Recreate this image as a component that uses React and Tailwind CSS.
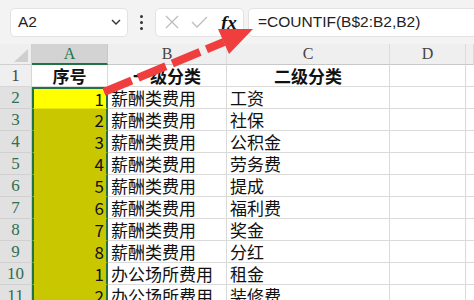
import React from 'react';

const rows = [
  { n: 1, a: '1', b: '薪酬类费用', c: '工资' },
  { n: 2, a: '2', b: '薪酬类费用', c: '社保' },
  { n: 3, a: '3', b: '薪酬类费用', c: '公积金' },
  { n: 4, a: '4', b: '薪酬类费用', c: '劳务费' },
  { n: 5, a: '5', b: '薪酬类费用', c: '提成' },
  { n: 6, a: '6', b: '薪酬类费用', c: '福利费' },
  { n: 7, a: '7', b: '薪酬类费用', c: '奖金' },
  { n: 8, a: '8', b: '薪酬类费用', c: '分红' },
  { n: 9, a: '1', b: '办公场所费用', c: '租金' },
  { n: 10, a: '2', b: '办公场所费用', c: '装修费' },
];

const cjk = { fontFamily: '"Noto Sans CJK SC", "Noto Sans", sans-serif' };
const serif = { fontFamily: '"Liberation Serif", "DejaVu Serif", serif' };

export default function App() {
  return (
    <div className="relative w-[474px] h-[300px] overflow-hidden bg-white">
      {/* Formula bar */}
      <div className="h-[44px] bg-[#f3f3f3] flex items-center pl-[10px]">
        <div className="w-[118px] h-[29px] bg-white rounded-[5px] border border-[#e3e3e3] flex items-center justify-between pl-[7px] pr-[6px]">
          <span className="text-[15.5px] text-[#222] leading-none" style={{ fontFamily: '"Liberation Sans", sans-serif' }}>A2</span>
          <svg width="10" height="6" viewBox="0 0 10 6" fill="none" stroke="#333" strokeWidth="1.4">
            <path d="M1 1l4 4 4-4" />
          </svg>
        </div>
        <div className="w-[27px] flex flex-col items-center gap-[3px]">
          <span className="w-[3px] h-[3px] rounded-full bg-[#333]" />
          <span className="w-[3px] h-[3px] rounded-full bg-[#333]" />
          <span className="w-[3px] h-[3px] rounded-full bg-[#333]" />
        </div>
        <div className="w-[89px] h-[29px] bg-white rounded-[5px] border border-[#e3e3e3] flex items-center pl-[9px]">
          <svg width="14" height="14" viewBox="0 0 14 14" stroke="#bdbdbd" strokeWidth="1.3">
            <path d="M1 1l12 12M13 1L1 13" />
          </svg>
          <svg className="ml-[12px]" width="17" height="12" viewBox="0 0 17 12" fill="none" stroke="#bdbdbd" strokeWidth="1.3">
            <path d="M1 6l5 5L16 1" />
          </svg>
          <span className="ml-[13px] text-[19px] italic font-bold text-[#111] leading-none" style={serif}>fx</span>
        </div>
        <div className="ml-[4px] flex-1 h-[29px] bg-white rounded-l-[5px] border border-r-0 border-[#e3e3e3] flex items-center pl-[9px]">
          <span className="text-[15.5px] text-[#222] leading-none" style={{ fontFamily: '"Liberation Sans", sans-serif' }}>=COUNTIF(B$2:B2,B2)</span>
        </div>
      </div>

      {/* Sheet */}
      <div className="grid grid-cols-[32px_76px_119px_163px_76px_1fr] leading-[20px]">
        <div className="h-[21px] bg-[#efefef] border-b border-r border-[#d0d0d0] relative">
          <svg className="absolute right-[3px] bottom-[2px]" width="14" height="13" viewBox="0 0 14 13">
            <path d="M14 0V13H0z" fill="#cfcfcf" />
          </svg>
        </div>
        <div className="h-[21px] bg-[#d3d3d3] border-b-2 border-r border-b-[#217346] border-r-[#c8c8c8] flex items-center justify-center text-[16px] text-[#217346]" style={serif}>A</div>
        {['B', 'C', 'D', ''].map((l, i) => (
          <div key={i} className="h-[21px] bg-[#efefef] border-b border-r border-b-[#c8c8c8] border-r-[#dcdcdc] flex items-center justify-center text-[16px] text-[#444]" style={serif}>{l}</div>
        ))}

        {/* Row 1 headings */}
        <div className="h-[22px] bg-[#efefef] border-b border-r border-[#d6d6d6] flex items-center justify-center text-[17px] text-[#444]" style={serif}>1</div>
        <div className="h-[22px] border-b border-r border-[#dadada] flex items-center justify-center text-[17px] font-bold text-[#111]" style={cjk}>序号</div>
        <div className="h-[22px] border-b border-r border-[#dadada] flex items-center justify-center text-[17px] font-bold text-[#111]" style={cjk}>一级分类</div>
        <div className="h-[22px] border-b border-r border-[#dadada] flex items-center justify-center text-[17px] font-bold text-[#111]" style={cjk}>二级分类</div>
        <div className="h-[22px] border-b border-r border-[#dadada]" />
        <div className="h-[22px] border-b border-[#dadada]" />

        {rows.map((r, i) => (
          <React.Fragment key={r.n}>
            <div className="h-[22px] bg-[#e1e1e1] border-b border-r border-b-[#d0d0d0] border-r-[#c4c4c4] flex items-center justify-center text-[17px] text-[#2f6e51]" style={serif}>{r.n + 1}</div>
            <div className={`h-[22px] border-x-2 border-x-[#217346] border-b flex items-center justify-end pr-[2px] text-[17px] text-[#111] ${i === 0 ? 'bg-[#ffff00] border-t-2 border-t-[#217346] border-b-[#e6e600]' : 'bg-[#c9c800] border-b-[#c9c800]'}`} style={cjk}>{r.a}</div>
            <div className="h-[22px] border-b border-r border-[#dadada] flex items-center pl-[3px] text-[17px] text-[#111] whitespace-nowrap" style={cjk}>{r.b}</div>
            <div className="h-[22px] border-b border-r border-[#dadada] flex items-center pl-[3px] text-[17px] text-[#111] whitespace-nowrap" style={cjk}>{r.c}</div>
            <div className="h-[22px] border-b border-r border-[#dadada]" />
            <div className="h-[22px] border-b border-[#dadada]" />
          </React.Fragment>
        ))}
      </div>

      {/* Red dashed arrow annotation */}
      <svg className="absolute left-0 top-0 pointer-events-none" width="474" height="300" viewBox="0 0 474 300">
        <line x1="104" y1="92" x2="224" y2="42" stroke="#f03e3e" strokeWidth="8" strokeDasharray="30 7" />
        <polygon points="253,29 229,54 218,29" fill="#f03e3e" />
      </svg>
    </div>
  );
}
